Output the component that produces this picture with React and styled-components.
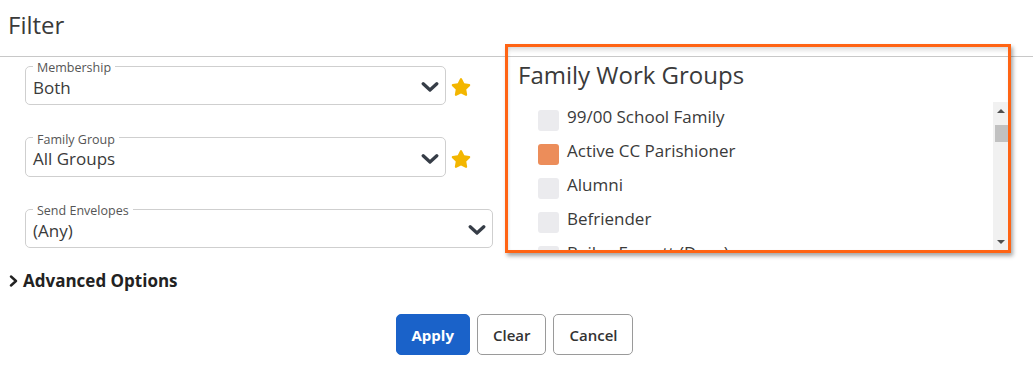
import React from 'react';
import styled, { createGlobalStyle } from 'styled-components';
import { FaStar } from 'react-icons/fa';

const GlobalStyle = createGlobalStyle`
  html, body { margin: 0; padding: 0; background: #fff; }
  body { font-family: "Open Sans", "Liberation Sans", sans-serif; color: #333; }
  * { box-sizing: border-box; }
`;

const Page = styled.div`
  width: 1033px;
  height: 366px;
  overflow: hidden;
  display: flex;
  flex-direction: column;
`;

const Header = styled.header`
  height: 57px;
  flex: none;
  border-bottom: 1px solid #c8c8c8;
  padding: 0 8px 6px;
  display: flex;
  align-items: center;
`;

const Title = styled.h1`
  margin: 0;
  font-size: 24px;
  font-weight: 400;
  color: #3a3a3a;
  line-height: 30px;
`;

const Body = styled.div`
  display: grid;
  grid-template-columns: 468px 506px;
  column-gap: 12px;
  align-items: start;
  padding: 0 0 0 25px;
`;

const Form = styled.div`
  display: flex;
  flex-direction: column;
  gap: 23.5px;
`;

const FieldRow = styled.div`
  display: flex;
  align-items: flex-end;
`;

const Field = styled.fieldset`
  flex: 1;
  min-width: 0;
  margin: 0;
  padding: 0 6px 5px 7px;
  border: 1px solid #cfcfcf;
  border-radius: 5px;
`;

const Legend = styled.legend`
  font-size: 12.5px;
  line-height: 14px;
  color: #555;
  padding: 4px 4px 0;
`;

const ValueRow = styled.div`
  height: 24px;
  display: flex;
  align-items: center;
  justify-content: space-between;
  font-size: 17px;
  color: #3a3a3a;
`;

const StarSlot = styled.div`
  width: 47px;
  padding: 0 0 8px 5px;
  display: flex;
  color: #f3b600;
  font-size: 20px;
`;

const Toggle = styled.div`
  display: flex;
  align-items: center;
  gap: 4px;
  padding-left: 9px;
  margin-top: 16px;
  font-size: 17px;
  line-height: 24px;
  font-weight: 700;
  color: #222;
`;

const ButtonBar = styled.div`
  display: flex;
  justify-content: center;
  gap: 7px;
  margin-top: 21px;
  padding-right: 4px;
`;

const Button = styled.button`
  height: 41px;
  padding: 0 15px;
  border-radius: 5px;
  font-family: inherit;
  font-size: 15px;
  font-weight: ${p => (p.$primary ? 700 : 600)};
  background: ${p => (p.$primary ? '#1a62c9' : '#fff')};
  color: ${p => (p.$primary ? '#fff' : '#333')};
  border: 1px solid ${p => (p.$primary ? '#1a62c9' : '#9a9a9a')};
`;

const Panel = styled.section`
  margin-top: -13px;
  width: 506px;
  height: 209px;
  border: 3px solid #ff6414;
  box-shadow: 2px 3px 4px rgba(0, 0, 0, 0.35), inset 0 5px 5px -2px rgba(0, 0, 0, 0.14),
    inset 2px 0 3px -1px rgba(0, 0, 0, 0.08);
  display: flex;
  flex-direction: column;
`;

const PanelTitle = styled.h2`
  margin: 0;
  padding: 13px 10px 12px;
  font-size: 24px;
  line-height: 30px;
  font-weight: 400;
  color: #3a3a3a;
`;

const ListArea = styled.div`
  flex: 1;
  min-height: 0;
  display: flex;
`;

const List = styled.ul`
  flex: 1;
  overflow: hidden;
  list-style: none;
  margin: 0;
  padding: 0 0 0 30px;
`;

const Item = styled.li`
  height: 29px;
  margin-bottom: 5px;
  display: flex;
  align-items: center;
  gap: 8px;
  font-size: 17px;
  color: #3a3a3a;
`;

const Check = styled.span`
  width: 21px;
  height: 21px;
  border-radius: 3px;
  margin-top: 8px;
  flex: none;
  background: ${p => (p.$checked ? '#ec8d5a' : '#ebebee')};
`;

const Scrollbar = styled.div`
  width: 15px;
  flex: none;
  background: #f1f1f1;
  display: flex;
  flex-direction: column;
`;

const ArrowButton = styled.div`
  height: 15px;
  flex: none;
  display: flex;
  justify-content: center;
  align-items: ${p => (p.$down ? 'flex-start' : 'flex-end')};
  padding: ${p => (p.$down ? '5px 0 0 1px' : '0 0 4px 1px')};
  &::before {
    content: '';
    border-left: 4px solid transparent;
    border-right: 4px solid transparent;
    ${p => (p.$down ? 'border-top: 4px solid #505050;' : 'border-bottom: 4px solid #505050;')}
  }
`;

const Track = styled.div`
  flex: 1;
  padding: 8px 0 0 2px;
`;

const Thumb = styled.div`
  height: 17px;
  background: #c1c1c1;
`;

const ChevronDown = () => (
  <svg width="18" height="10" viewBox="0 0 18 10">
    <path d="M2.2 1.8 L9 8 L15.8 1.8" fill="none" stroke="#363d47" strokeWidth="3.3" strokeLinecap="round" strokeLinejoin="round" />
  </svg>
);

const ChevronRight = () => (
  <svg width="10" height="12" viewBox="0 0 10 12">
    <path d="M2 1.5 L7 6 L2 10.5" fill="none" stroke="#222" strokeWidth="2.4" strokeLinecap="round" strokeLinejoin="round" />
  </svg>
);

const groups = [
  '99/00 School Family',
  'Active CC Parishioner',
  'Alumni',
  'Befriender',
  'Bailey Everett (Dave)',
  'Bereavement Ministry',
  'Bible Study',
  'Choir',
  'Communion Ministers',
  'Confirmation',
  'Eucharistic Ministers',
  'Finance Council',
  'Food Pantry',
  'Greeters',
  'Hospitality',
  'Knights of Columbus',
  'Lectors',
  "Men's Club",
  'Parish Council',
  'Prayer Group',
  'RCIA',
  'Religious Education',
  'Sacristans',
  'St. Vincent de Paul',
  'Stewardship',
  'Ushers',
  'Vacation Bible School',
  "Women's Guild",
  'Young Adults',
  'Youth Ministry',
];

const fields = [
  { label: 'Membership', value: 'Both', star: true },
  { label: 'Family Group', value: 'All Groups', star: true },
  { label: 'Send Envelopes', value: '(Any)', star: false },
];

export default function App() {
  return (
    <Page>
      <GlobalStyle />
      <Header>
        <Title>Filter</Title>
      </Header>
      <Body>
        <Form>
          {fields.map(f => (
            <FieldRow key={f.label}>
              <Field>
                <Legend>{f.label}</Legend>
                <ValueRow>
                  <span>{f.value}</span>
                  <ChevronDown />
                </ValueRow>
              </Field>
              {f.star && (
                <StarSlot>
                  <FaStar />
                </StarSlot>
              )}
            </FieldRow>
          ))}
        </Form>
        <Panel>
          <PanelTitle>Family Work Groups</PanelTitle>
          <ListArea>
            <List>
              {groups.map(g => (
                <Item key={g}>
                  <Check $checked={g === 'Active CC Parishioner'} />
                  <span>{g}</span>
                </Item>
              ))}
            </List>
            <Scrollbar>
              <ArrowButton />
              <Track>
                <Thumb />
              </Track>
              <ArrowButton $down />
            </Scrollbar>
          </ListArea>
        </Panel>
      </Body>
      <Toggle>
        <ChevronRight />
        <span>Advanced Options</span>
      </Toggle>
      <ButtonBar>
        <Button $primary>Apply</Button>
        <Button>Clear</Button>
        <Button>Cancel</Button>
      </ButtonBar>
    </Page>
  );
}
